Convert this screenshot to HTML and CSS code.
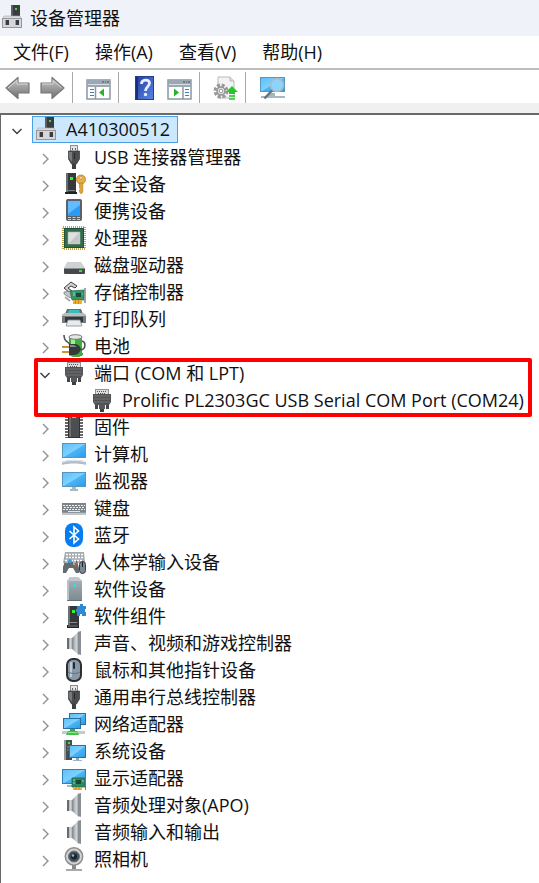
FILE: index.html
```
<!DOCTYPE html>
<html lang="zh-CN">
<head>
  <meta charset="UTF-8">
  <meta name="viewport" content="width=device-width, initial-scale=1.0">
  <title>设备管理器</title>
  <link rel="stylesheet" href="styles.css">
</head>
<body>
  <!-- Icon sprite -->
  <svg class="sprite" aria-hidden="true">
    <defs>
      <linearGradient id="screen" x1="0" y1="0" x2="1" y2="1">
        <stop offset="0" stop-color="#5bc0f8"/><stop offset=".5" stop-color="#7fd0ff"/><stop offset=".52" stop-color="#4db5f5"/><stop offset="1" stop-color="#2b9be8"/>
      </linearGradient>
      <linearGradient id="metal" x1="0" y1="0" x2="1" y2="0">
        <stop offset="0" stop-color="#7d8388"/><stop offset=".6" stop-color="#d3d7da"/><stop offset="1" stop-color="#8b9196"/>
      </linearGradient>
      <linearGradient id="steel" x1="0" y1="0" x2="0" y2="1">
        <stop offset="0" stop-color="#aab4bb"/><stop offset="1" stop-color="#7c8990"/>
      </linearGradient>
      <linearGradient id="grey" x1="0" y1="0" x2="0" y2="1">
        <stop offset="0" stop-color="#c8c8c8"/><stop offset="1" stop-color="#707070"/>
      </linearGradient>
      <linearGradient id="blue" x1="0" y1="0" x2="1" y2="1">
        <stop offset="0" stop-color="#23409f"/><stop offset="1" stop-color="#5a86e6"/>
      </linearGradient>
    </defs>

    <symbol id="i-root" viewBox="0 0 24 24">
      <rect x="11" y="0" width="9" height="13" fill="#3a3d40"/>
      <rect x="11" y="0" width="2" height="13" fill="#5c6063"/>
      <rect x="15" y="3" width="2" height="2" fill="#3be03b"/>
      <path d="M4 11h16l2 4H2z" fill="#d9dbdd" stroke="#a5a8ab" stroke-width=".6"/>
      <rect x="2.500" y="13.500" width="19" height="9" fill="#d6d6da" stroke="#97979d"/>
      <rect x="5" y="15" width="4" height="5" fill="#3c3c40"/><rect x="15" y="15" width="4" height="5" fill="#3c3c40"/>
      <path d="M5.500 15v5M15.500 15v5" stroke="#999"/>
    </symbol>

    <symbol id="i-usb" viewBox="0 0 24 24">
      <rect x="8.500" y=".5" width="7" height="6" fill="#e4e4e4" stroke="#8c8c8c"/>
      <path d="M10 3h1v2h-1zM13 3h1v2h-1z" fill="#666"/>
      <path d="M6.500 6h11v8l-3 5h-5l-3-5z" fill="#4b4d4f" stroke="#35373a" stroke-width=".7"/>
      <path d="M7 7h3v10l-3-4z" fill="#77797b"/>
      <path d="M12.500 8v6" fill="none" stroke="#26282a" stroke-width="1"/>
      <rect x="10" y="19" width="4" height="5" fill="#3d3f41"/>
    </symbol>

    <symbol id="i-security" viewBox="0 0 24 24">
      <path d="M4 1h10v20H4z" fill="#35393c"/><path d="M4 1h2v20H4z" fill="#686d70"/>
      <rect x="8" y="5" width="3" height="3" fill="#35f035"/>
      <path d="M3 20h12v2H3z" fill="#1f2224"/><path d="M5 18h8v1H5z" fill="#7c8083"/>
      <circle cx="19" cy="7.500" r="4.500" fill="#e8b04a" stroke="#b27a22" stroke-width=".8"/>
      <circle cx="19" cy="5.800" r="1.300" fill="#fff" stroke="#9c6d20" stroke-width=".5"/>
      <path d="M17.500 11h3.300v9l-1.600 2-1.700-2v-2l1-1-1-1z" fill="#e0a43b" stroke="#b27a22" stroke-width=".6"/>
    </symbol>

    <symbol id="i-portable" viewBox="0 0 24 24">
      <rect x="4.500" y=".5" width="15" height="21" rx="1" fill="#5b6166" stroke="#5b6166"/>
      <rect x="6" y="2" width="12" height="15" fill="#2b9cf5"/>
      <path d="M6 2h12v4L6 15z" fill="#62bcff"/>
      <path d="M6 18.500h3M10.500 18.500h3M15 18.500h3M6 20.500h3M10.500 20.500h3M15 20.500h3" stroke="#c8cdd1"/>
    </symbol>

    <symbol id="i-cpu" viewBox="0 0 24 24">
      <rect x="1" y="1" width="22" height="22" fill="none" stroke="#c1a24c" stroke-width="2" stroke-dasharray="1 1"/>
      <rect x="2.500" y="2.500" width="19" height="19" fill="#2f6b4c" stroke="#1f5338"/>
      <rect x="6" y="6" width="12" height="12" fill="#e0e0e0" stroke="#a5aea9" stroke-width=".6"/>
      <path d="M6.500 17.500l11-11v11z" fill="#c6c6c6"/>
    </symbol>

    <symbol id="i-disk" viewBox="0 0 24 24">
      <path d="M5 9h14l4 6H2z" fill="#cfd1d3"/>
      <path d="M2 15h21v5a1 1 0 0 1-1 1H3a1 1 0 0 1-1-1z" fill="#46494c"/>
      <path d="M2 15.500h21" stroke="#8b8f92"/>
      <rect x="17" y="17" width="3" height="2" fill="#37e237"/>
    </symbol>

    <symbol id="i-storage" viewBox="0 0 24 24">
      <path d="M9 2l6 4-2 2-4-2-3 2 4 3-2 2-6-5z" fill="#d0d0d0" stroke="#3f3f3f" stroke-width="1"/>
      <path d="M4 14l7 4M3 17l5 4" stroke="#a6abad" stroke-width="2"/>
      <path d="M2 12l7-1 3 4-4 3-6-4z" fill="#bfc4c7" stroke="#666" stroke-width=".6"/>
      <path d="M8 11l14-1v10H10z" fill="#36946b" stroke="#1f6a49" stroke-width=".7"/>
      <rect x="14" y="13" width="5" height="4" fill="#174c36"/><path d="M11 13h2M11 15h2M20 14h1" stroke="#8de0b7"/>
      <path d="M23 8v15" stroke="#85898c" stroke-width="1.500"/>
      <path d="M11 20h9v4h-9z" fill="#f3ad27"/><path d="M13.500 20v4M16.500 20v4" stroke="#b77817" stroke-width=".7"/>
    </symbol>

    <symbol id="i-printer" viewBox="0 0 24 24">
      <path d="M5 2h14l2 5H3z" fill="#6b7074"/><path d="M7 3h10l1 3H6z" fill="#3ebcb8"/>
      <path d="M0 8l3-2h18l3 2v8H0z" fill="#777c80"/><path d="M0 8l3-2h18l3 2v1H0z" fill="#b9bdc0"/>
      <path d="M3 10h18v5H3z" fill="#33373a"/>
      <path d="M6 13h12l2 6H4z" fill="#e8eaec" stroke="#868b8f" stroke-width=".8"/>
    </symbol>

    <symbol id="i-battery" viewBox="0 0 24 24">
      <ellipse cx="14" cy="20" rx="7" ry="3" fill="#277a2b"/>
      <path d="M7 3h13v17a6.500 3 0 0 1-13 0z" fill="#3eae3e"/><path d="M9 5h4v8H9z" fill="#a3eb8e"/>
      <ellipse cx="13.500" cy="3" rx="6.500" ry="2.300" fill="#e4e8e4" stroke="#777"/>
      <path d="M2 1c0 8 4 5 6 10M19 16c5-1 5-8 1-9" fill="none" stroke="#4c5254" stroke-width="1.600"/>
      <path d="M7 10h5c4 0 6 2 7 5-1 3-3 6-7 6H7z" fill="#34393b"/><path d="M8 11h4l3 2H8z" fill="#81888b"/>
      <path d="M0 13h7M0 18h7" stroke="#c59632" stroke-width="2"/>
    </symbol>

    <symbol id="i-port" viewBox="0 0 24 24">
      <rect x="5.500" y="1.500" width="13" height="6" fill="#dedede" stroke="#929292"/>
      <path d="M7 3.500h10M8 5.500h8" stroke="#555" stroke-dasharray="1 1"/>
      <path d="M3 6h18v8l-2 3H5l-2-3z" fill="#505254"/>
      <path d="M4 8h16M4 11h16M4 14h16" stroke="#737577"/>
      <rect x="5" y="17" width="3" height="4" fill="#454749"/><rect x="16" y="17" width="3" height="4" fill="#454749"/>
      <rect x="9" y="16" width="6" height="5" fill="#55575a"/><rect x="10" y="21" width="4" height="3" fill="#3c3e40"/>
    </symbol>

    <symbol id="i-firmware" viewBox="0 0 24 24">
      <path d="M4.500 1v22M19.500 1v22" stroke="#666" stroke-width="3" stroke-dasharray="2 1"/>
      <path d="M6 0h12v23H6z" fill="#303234"/><path d="M7 1h10v21H7z" fill="#4c4f51"/>
      <path d="M10 0h4v3h-4z" fill="#b9bcbe"/><path d="M7 1h2v21H7z" fill="#6b6e70"/>
    </symbol>

    <symbol id="i-computer" viewBox="0 0 24 24">
      <rect x=".5" y="1.500" width="23" height="14" fill="url(#screen)" stroke="#5596c0"/>
      <path d="M0 20c5-3 19-3 24 0v3c-7-2-17-2-24 0z" fill="#b0bfc9"/><path d="M1 20c5-2 17-2 22 0" stroke="#e6ecef" fill="none"/>
    </symbol>

    <symbol id="i-monitor" viewBox="0 0 24 24">
      <rect x=".5" y="3.500" width="23" height="14" fill="url(#screen)" stroke="#5596c0"/>
      <path d="M10 18h4v2h-4z" fill="#a9bbc6"/><path d="M8 21h8" stroke="#a6bac6" stroke-width="2"/>
    </symbol>

    <symbol id="i-keyboard" viewBox="0 0 24 24">
      <path d="M0 7h24v12H0z" fill="#90979c"/><path d="M0 7h24v9H0z" fill="#7c8489"/>
      <path d="M1 9.500h22M2 11.500h20M1 13.500h22" stroke="#eef1f3" stroke-dasharray="2 1"/>
      <path d="M6 15.500h12" stroke="#e4e7e9"/><path d="M0 18h24" stroke="#c2c6c9" stroke-width="2"/>
    </symbol>

    <symbol id="i-bluetooth" viewBox="0 0 24 24">
      <rect x="3" y="0" width="18" height="24" rx="8" fill="#087df2"/>
      <path d="M7.500 8l9 8-4.500 4V4l4.500 4-9 8" fill="none" stroke="#fff" stroke-width="1.600"/>
    </symbol>

    <symbol id="i-hid" viewBox="0 0 24 24">
      <path d="M3 2h19l1 11H1z" fill="#a5acb1"/>
      <path d="M4 4.500h17M4 7.500h17M3 10.500h18" stroke="#fff" stroke-width="1.500" stroke-dasharray="2 1"/>
      <path d="M3 11h3l2 1h2l2-1h3l2 7v5h-3l-3-5H7l-3 5H1v-6z" fill="#646b70"/>
      <path d="M3 12h3M11 12h3" stroke="#b1b8bc" stroke-width="2"/>
      <circle cx="12" cy="14" r="1" fill="#f2b73f"/><circle cx="14" cy="15" r="1" fill="#e34c3b"/><circle cx="8" cy="11" r="2" fill="#37a1ee"/>
      <rect x="17.500" y="11.500" width="6" height="12" rx="3" fill="#798792" stroke="#333c43"/><path d="M20.500 12v5" stroke="#1e262c"/>
    </symbol>

    <symbol id="i-softdevice" viewBox="0 0 24 24">
      <path d="M8 0h8l4 4v19l-1 1H5V4z" fill="url(#steel)"/><path d="M8 0h8l4 4H5z" fill="#c0c8cd"/>
      <path d="M5 4h2v20H5z" fill="#b8c1c6"/><path d="M5 23.500h15" stroke="#667177"/>
      <rect x="11" y="7" width="3" height="3" fill="#30daf0"/>
    </symbol>

    <symbol id="i-softcomponent" viewBox="0 0 24 24">
      <path d="M6 2h11v19H6z" fill="#34383b"/><path d="M6 2h2v19H6z" fill="#6c7174"/>
      <rect x="10" y="6" width="3" height="3" fill="#35f035"/><path d="M8 18h7v1H8z" fill="#888d90"/>
      <path d="M5 21h12v3H5z" fill="#202325"/><path d="M6 22h10" stroke="#83888b"/>
      <path d="M15 2h3V0h3v2h3v3h-1v3h1v4h-4v-2h-2v2h-3V8h-1V5h1z" fill="#2e8bd3"/>
    </symbol>

    <symbol id="i-speaker" viewBox="0 0 24 24">
      <path d="M5 7h6v11H5z" fill="url(#metal)"/><path d="M5 7h2v11H5z" fill="#666d72"/>
      <path d="M10 7l7-7v24l-7-6z" fill="url(#metal)"/>
      <path d="M16 1l3-1v24l-3-1z" fill="#878f95"/>
    </symbol>

    <symbol id="i-mouse" viewBox="0 0 24 24">
      <rect x="5" y="1" width="14" height="22" rx="6" fill="#8999a8" stroke="#2a2f33" stroke-width="2"/>
      <path d="M8 4h2v15H8z" fill="#bdc9d4"/><path d="M6 14c4 2 8 2 12 0" stroke="#64727e" fill="none"/>
      <rect x="11" y="4" width="2" height="7" rx="1" fill="#242a2e"/>
    </symbol>

    <symbol id="i-network" viewBox="0 0 24 24">
      <rect x="7.500" y="1.500" width="16" height="11" fill="url(#screen)" stroke="#296f9f"/>
      <rect x="1.500" y="6.500" width="17" height="10" fill="url(#screen)" stroke="#296f9f"/>
      <path d="M8 17h5v3H8z" fill="#38a944"/><path d="M0 20.500h23" stroke="#c4cacd" stroke-width="3"/>
      <path d="M6 19h9l2 4H4z" fill="#3ec44b"/><path d="M6 20.500h9" stroke="#90e792"/>
    </symbol>

    <symbol id="i-system" viewBox="0 0 24 24">
      <path d="M2 1h8v20H2z" fill="#484d50"/><path d="M2 1h2v20H2z" fill="#969da1"/>
      <path d="M5 8h4M5 11h4" stroke="#858b8f"/><rect x="6" y="3" width="2" height="2" fill="#38ea38"/>
      <rect x="7.500" y="6.500" width="16" height="12" fill="url(#screen)" stroke="#296f9f"/>
      <path d="M14 19h3v2h-3z" fill="#91a5b1"/><path d="M11 21.500h9" stroke="#9db6c5"/>
    </symbol>

    <symbol id="i-display" viewBox="0 0 24 24">
      <rect x=".5" y="3.500" width="23" height="14" fill="url(#screen)" stroke="#2f7fb8"/>
      <path d="M5 20h7" stroke="#a6bac6" stroke-width="2"/>
      <path d="M10 12h13v9H10z" fill="#2d8964" stroke="#1c5e42" stroke-width=".7"/>
      <rect x="14" y="14" width="5" height="4" fill="#164a35"/><path d="M11 14h2M11 17h2M20 15h2" stroke="#8ad8b1"/>
      <path d="M23.500 11v13" stroke="#777"/><path d="M11 21h9v3h-9z" fill="#f3ad27"/><path d="M14 21v3M17 21v3" stroke="#b77817" stroke-width=".7"/>
    </symbol>

    <symbol id="i-camera" viewBox="0 0 24 24">
      <path d="M10 17h4v5h-4z" fill="#888"/><path d="M4 23h16" stroke="#a8a8a8" stroke-width="2"/>
      <circle cx="12" cy="9.500" r="8.700" fill="#d2d2d2" stroke="#8d8d8d" stroke-width="1.500"/>
      <circle cx="12" cy="9.500" r="5.500" fill="#465058" stroke="#6d767c"/>
      <circle cx="12" cy="9.500" r="3" fill="#1b2329"/><circle cx="11" cy="8.500" r="1.300" fill="#75bde8"/>
    </symbol>

    <!-- Toolbar -->
    <symbol id="t-back" viewBox="0 0 26 24">
      <path d="M1 12L13 1.500V7h11v10H13v5.500z" fill="url(#grey)" stroke="#777" stroke-width="1.200" stroke-linejoin="round"/>
      <path d="M3 12l9-7.500V8h11" fill="none" stroke="#d8d8d8"/>
    </symbol>
    <symbol id="t-forward" viewBox="0 0 26 24">
      <path d="M24 12L12 1.500V7H1v10h11v5.500z" fill="url(#grey)" stroke="#777" stroke-width="1.200" stroke-linejoin="round"/>
      <path d="M2 8h11V4.500l8.500 7" fill="none" stroke="#d8d8d8"/>
    </symbol>
    <symbol id="t-tree" viewBox="0 0 26 24">
      <rect x="1" y="4" width="23" height="19" fill="#fff" stroke="#8b97a3" stroke-width="1.500"/>
      <path d="M1 4h23v7H1z" fill="#9ba8b4"/><path d="M2 8.500h21" stroke="#d7dfe6"/>
      <path d="M16 6h2M19 6h1M21 6h2" stroke="#46515b"/><path d="M9.500 11v12" stroke="#8b97a3" stroke-width="1.500"/>
      <path d="M4 13.500h4M4 16.500h4M4 19.500h4" stroke="#3e7fc4" stroke-width="1.200"/>
      <path d="M18 12.500v8l-5-4z" fill="#29b229"/>
    </symbol>
    <symbol id="t-help" viewBox="0 0 26 24">
      <rect x="3.500" y=".5" width="18" height="23" fill="url(#blue)" stroke="#243d8e"/>
      <path d="M5 1v22" stroke="#182f7e" stroke-width="2"/>
      <path d="M9.500 8c0-5 8-5 8-1 0 4-4 3.500-4 8" fill="none" stroke="#e8edff" stroke-width="2.800"/><circle cx="13.500" cy="18.500" r="1.700" fill="#e8edff"/>
    </symbol>
    <symbol id="t-action" viewBox="0 0 26 24">
      <rect x="1" y="4" width="23" height="19" fill="#fff" stroke="#8b97a3" stroke-width="1.500"/>
      <path d="M1 4h23v7H1z" fill="#9ba8b4"/><path d="M2 8.500h21" stroke="#d7dfe6"/>
      <path d="M16 6h2M19 6h1M21 6h2" stroke="#46515b"/><path d="M16 11v12" stroke="#8b97a3" stroke-width="1.500"/>
      <path d="M18 13.500h4M18 16.500h4M18 19.500h4" stroke="#3e7fc4" stroke-width="1.200"/>
      <path d="M7 12.500v8l5-4z" fill="#29b229"/>
    </symbol>
    <symbol id="t-update" viewBox="0 0 26 24">
      <path d="M5 1h12l4 4v17H5z" fill="#f3f3f3" stroke="#b9b9b9"/><path d="M17 1v4h4" fill="#ddd" stroke="#b9b9b9"/>
      <circle cx="8" cy="15" r="6" fill="none" stroke="#999" stroke-width="3" stroke-dasharray="3 1.710"/>
      <circle cx="8" cy="15" r="4" fill="#e3e3e3" stroke="#909090" stroke-width="1.500"/><circle cx="8" cy="15" r="1.800" fill="#fff" stroke="#999"/>
      <path d="M19 10l6 6h-3v2h-6v-2h-3z" fill="#25c52d"/><path d="M16 20h6M16 23h6" stroke="#25c52d" stroke-width="1.600"/>
    </symbol>
    <symbol id="t-scan" viewBox="0 0 26 24">
      <rect x="1.500" y="1.500" width="24" height="14" fill="url(#screen)" stroke="#5596c0"/>
      <path d="M9 17h7v3H9z" fill="#a4b6c1"/><path d="M2 21h24" stroke="#a6b8c3" stroke-width="2"/>
      <circle cx="18" cy="9" r="6.500" fill="#8fd3fb" stroke="#a3bccb" stroke-width="1.600"/>
      <path d="M13 14.500L5.500 22.500" stroke="#67737b" stroke-width="2.500"/>
    </symbol>

    <symbol id="chev-right" viewBox="0 0 12 12"><path d="M4 1l5 5-5 5" fill="none" stroke="#8f8f8f" stroke-width="1.400"/></symbol>
    <symbol id="chev-down" viewBox="0 0 12 12"><path d="M1.500 4L6 8.500 10.500 4" fill="none" stroke="#404040" stroke-width="1.500"/></symbol>
  </svg>

  <header class="titlebar">
    <svg class="icon"><use href="#i-root"/></svg>
    <h1>设备管理器</h1>
  </header>

  <nav class="menubar">
    <button type="button">文件(F)</button>
    <button type="button">操作(A)</button>
    <button type="button">查看(V)</button>
    <button type="button">帮助(H)</button>
  </nav>

  <div class="toolbar">
    <button type="button" aria-label="后退"><svg><use href="#t-back"/></svg></button>
    <button type="button" aria-label="前进"><svg><use href="#t-forward"/></svg></button>
    <span class="sep"></span>
    <button type="button" aria-label="显示/隐藏控制台树"><svg><use href="#t-tree"/></svg></button>
    <span class="sep"></span>
    <button type="button" aria-label="帮助"><svg><use href="#t-help"/></svg></button>
    <button type="button" aria-label="显示/隐藏操作窗格"><svg><use href="#t-action"/></svg></button>
    <span class="sep"></span>
    <button type="button" aria-label="更新驱动程序"><svg><use href="#t-update"/></svg></button>
    <span class="sep"></span>
    <button type="button" aria-label="扫描检测硬件改动"><svg><use href="#t-scan"/></svg></button>
  </div>

  <main class="tree">
    <div class="row">
      <button class="toggle" type="button" aria-label="折叠"><svg><use href="#chev-down"/></svg></button>
      <span class="label selected"><svg class="icon"><use href="#i-root"/></svg>A410300512</span>
    </div>
    <ul class="devices">
      <li><div class="row"><button class="toggle" type="button" aria-label="展开"><svg><use href="#chev-right"/></svg></button><span class="label"><svg class="icon"><use href="#i-usb"/></svg>USB 连接器管理器</span></div></li>
      <li><div class="row"><button class="toggle" type="button" aria-label="展开"><svg><use href="#chev-right"/></svg></button><span class="label"><svg class="icon"><use href="#i-security"/></svg>安全设备</span></div></li>
      <li><div class="row"><button class="toggle" type="button" aria-label="展开"><svg><use href="#chev-right"/></svg></button><span class="label"><svg class="icon"><use href="#i-portable"/></svg>便携设备</span></div></li>
      <li><div class="row"><button class="toggle" type="button" aria-label="展开"><svg><use href="#chev-right"/></svg></button><span class="label"><svg class="icon"><use href="#i-cpu"/></svg>处理器</span></div></li>
      <li><div class="row"><button class="toggle" type="button" aria-label="展开"><svg><use href="#chev-right"/></svg></button><span class="label"><svg class="icon"><use href="#i-disk"/></svg>磁盘驱动器</span></div></li>
      <li><div class="row"><button class="toggle" type="button" aria-label="展开"><svg><use href="#chev-right"/></svg></button><span class="label"><svg class="icon"><use href="#i-storage"/></svg>存储控制器</span></div></li>
      <li><div class="row"><button class="toggle" type="button" aria-label="展开"><svg><use href="#chev-right"/></svg></button><span class="label"><svg class="icon"><use href="#i-printer"/></svg>打印队列</span></div></li>
      <li><div class="row"><button class="toggle" type="button" aria-label="展开"><svg><use href="#chev-right"/></svg></button><span class="label"><svg class="icon"><use href="#i-battery"/></svg>电池</span></div></li>
      <li class="marked">
        <div class="row"><button class="toggle" type="button" aria-label="折叠"><svg><use href="#chev-down"/></svg></button><span class="label"><svg class="icon"><use href="#i-port"/></svg>端口 (COM 和 LPT)</span></div>
        <ul>
          <li><div class="row leaf"><span class="label"><svg class="icon"><use href="#i-port"/></svg>Prolific PL2303GC USB Serial COM Port (COM24)</span></div></li>
        </ul>
      </li>
      <li><div class="row"><button class="toggle" type="button" aria-label="展开"><svg><use href="#chev-right"/></svg></button><span class="label"><svg class="icon"><use href="#i-firmware"/></svg>固件</span></div></li>
      <li><div class="row"><button class="toggle" type="button" aria-label="展开"><svg><use href="#chev-right"/></svg></button><span class="label"><svg class="icon"><use href="#i-computer"/></svg>计算机</span></div></li>
      <li><div class="row"><button class="toggle" type="button" aria-label="展开"><svg><use href="#chev-right"/></svg></button><span class="label"><svg class="icon"><use href="#i-monitor"/></svg>监视器</span></div></li>
      <li><div class="row"><button class="toggle" type="button" aria-label="展开"><svg><use href="#chev-right"/></svg></button><span class="label"><svg class="icon"><use href="#i-keyboard"/></svg>键盘</span></div></li>
      <li><div class="row"><button class="toggle" type="button" aria-label="展开"><svg><use href="#chev-right"/></svg></button><span class="label"><svg class="icon"><use href="#i-bluetooth"/></svg>蓝牙</span></div></li>
      <li><div class="row"><button class="toggle" type="button" aria-label="展开"><svg><use href="#chev-right"/></svg></button><span class="label"><svg class="icon"><use href="#i-hid"/></svg>人体学输入设备</span></div></li>
      <li><div class="row"><button class="toggle" type="button" aria-label="展开"><svg><use href="#chev-right"/></svg></button><span class="label"><svg class="icon"><use href="#i-softdevice"/></svg>软件设备</span></div></li>
      <li><div class="row"><button class="toggle" type="button" aria-label="展开"><svg><use href="#chev-right"/></svg></button><span class="label"><svg class="icon"><use href="#i-softcomponent"/></svg>软件组件</span></div></li>
      <li><div class="row"><button class="toggle" type="button" aria-label="展开"><svg><use href="#chev-right"/></svg></button><span class="label"><svg class="icon"><use href="#i-speaker"/></svg>声音、视频和游戏控制器</span></div></li>
      <li><div class="row"><button class="toggle" type="button" aria-label="展开"><svg><use href="#chev-right"/></svg></button><span class="label"><svg class="icon"><use href="#i-mouse"/></svg>鼠标和其他指针设备</span></div></li>
      <li><div class="row"><button class="toggle" type="button" aria-label="展开"><svg><use href="#chev-right"/></svg></button><span class="label"><svg class="icon"><use href="#i-usb"/></svg>通用串行总线控制器</span></div></li>
      <li><div class="row"><button class="toggle" type="button" aria-label="展开"><svg><use href="#chev-right"/></svg></button><span class="label"><svg class="icon"><use href="#i-network"/></svg>网络适配器</span></div></li>
      <li><div class="row"><button class="toggle" type="button" aria-label="展开"><svg><use href="#chev-right"/></svg></button><span class="label"><svg class="icon"><use href="#i-system"/></svg>系统设备</span></div></li>
      <li><div class="row"><button class="toggle" type="button" aria-label="展开"><svg><use href="#chev-right"/></svg></button><span class="label"><svg class="icon"><use href="#i-display"/></svg>显示适配器</span></div></li>
      <li><div class="row"><button class="toggle" type="button" aria-label="展开"><svg><use href="#chev-right"/></svg></button><span class="label"><svg class="icon"><use href="#i-speaker"/></svg>音频处理对象(APO)</span></div></li>
      <li><div class="row"><button class="toggle" type="button" aria-label="展开"><svg><use href="#chev-right"/></svg></button><span class="label"><svg class="icon"><use href="#i-speaker"/></svg>音频输入和输出</span></div></li>
      <li><div class="row"><button class="toggle" type="button" aria-label="展开"><svg><use href="#chev-right"/></svg></button><span class="label"><svg class="icon"><use href="#i-camera"/></svg>照相机</span></div></li>
    </ul>
  </main>
</body>
</html>
```
FILE: styles.css
```
* {
  box-sizing: border-box;
}

body {
  margin: 0;
  min-height: 100vh;
  display: flex;
  flex-direction: column;
  font-family: "Open Sans", "Noto Sans CJK SC", sans-serif;
  font-size: 18px;
  color: #111;
  background-color: #f0f0f0;
}

button {
  padding: 0;
  border: none;
  background: none;
  font: inherit;
  color: inherit;
}

.sprite {
  position: absolute;
  width: 0;
  height: 0;
}

.icon {
  flex: none;
  width: 24px;
  height: 24px;
}

/* Window title */
.titlebar {
  display: flex;
  align-items: center;
  gap: 6px;
  height: 36px;
  padding-bottom: 3px;
  background-color: #eff3f9;
}

.titlebar h1 {
  margin: 0;
  font-size: 18px;
  font-weight: normal;
}

/* Menu */
.menubar {
  display: flex;
  gap: 26px;
  height: 32px;
  padding: 0 13px;
  background-color: #fff;
}

.menubar button {
  line-height: 32px;
}

/* Toolbar */
.toolbar {
  display: flex;
  height: 35px;
  border-top: 2px solid #bdbdbd;
  background-color: #fff;
}

.toolbar button {
  display: flex;
  align-items: center;
  justify-content: center;
  width: 35px;
  padding-top: 3px;
}

.toolbar svg {
  width: 26px;
  height: 24px;
}

.toolbar .sep {
  width: 1px;
  margin: 2px 8px 0 2px;
  background-color: #a9a9a9;
}

/* Device tree */
.tree {
  flex: 1;
  margin-top: 10px;
  padding: 1px 0 0 1px;
  border-top: 2px solid #696969;
  border-left: 1px solid #696969;
  background-color: #fff;
}

.tree ul {
  margin: 0;
  padding: 0 0 0 28px;
  list-style: none;
}

.tree .devices {
  padding-top: 1px;
}

.row {
  display: flex;
  height: 27px;
}

.row.leaf {
  padding-left: 30px;
}

.toggle {
  display: flex;
  align-items: center;
  justify-content: center;
  width: 30px;
  padding-top: 2px;
}

.toggle svg {
  width: 12px;
  height: 12px;
}

.label {
  display: flex;
  gap: 8px;
  padding: 0 8px 0 2px;
  line-height: 27px;
  white-space: nowrap;
}

.label .icon {
  margin-top: 1px;
}

.label.selected {
  background-color: #cce8ff;
  outline: 1px solid #4aa0e6;
  outline-offset: -1px;
}

/* Red frame around the serial port entry */
.marked {
  position: relative;
}

.marked::after {
  content: "";
  position: absolute;
  inset: -2px 7px -3px 4px;
  border: 4px solid #fe0000;
  border-radius: 2px;
  pointer-events: none;
}
```
